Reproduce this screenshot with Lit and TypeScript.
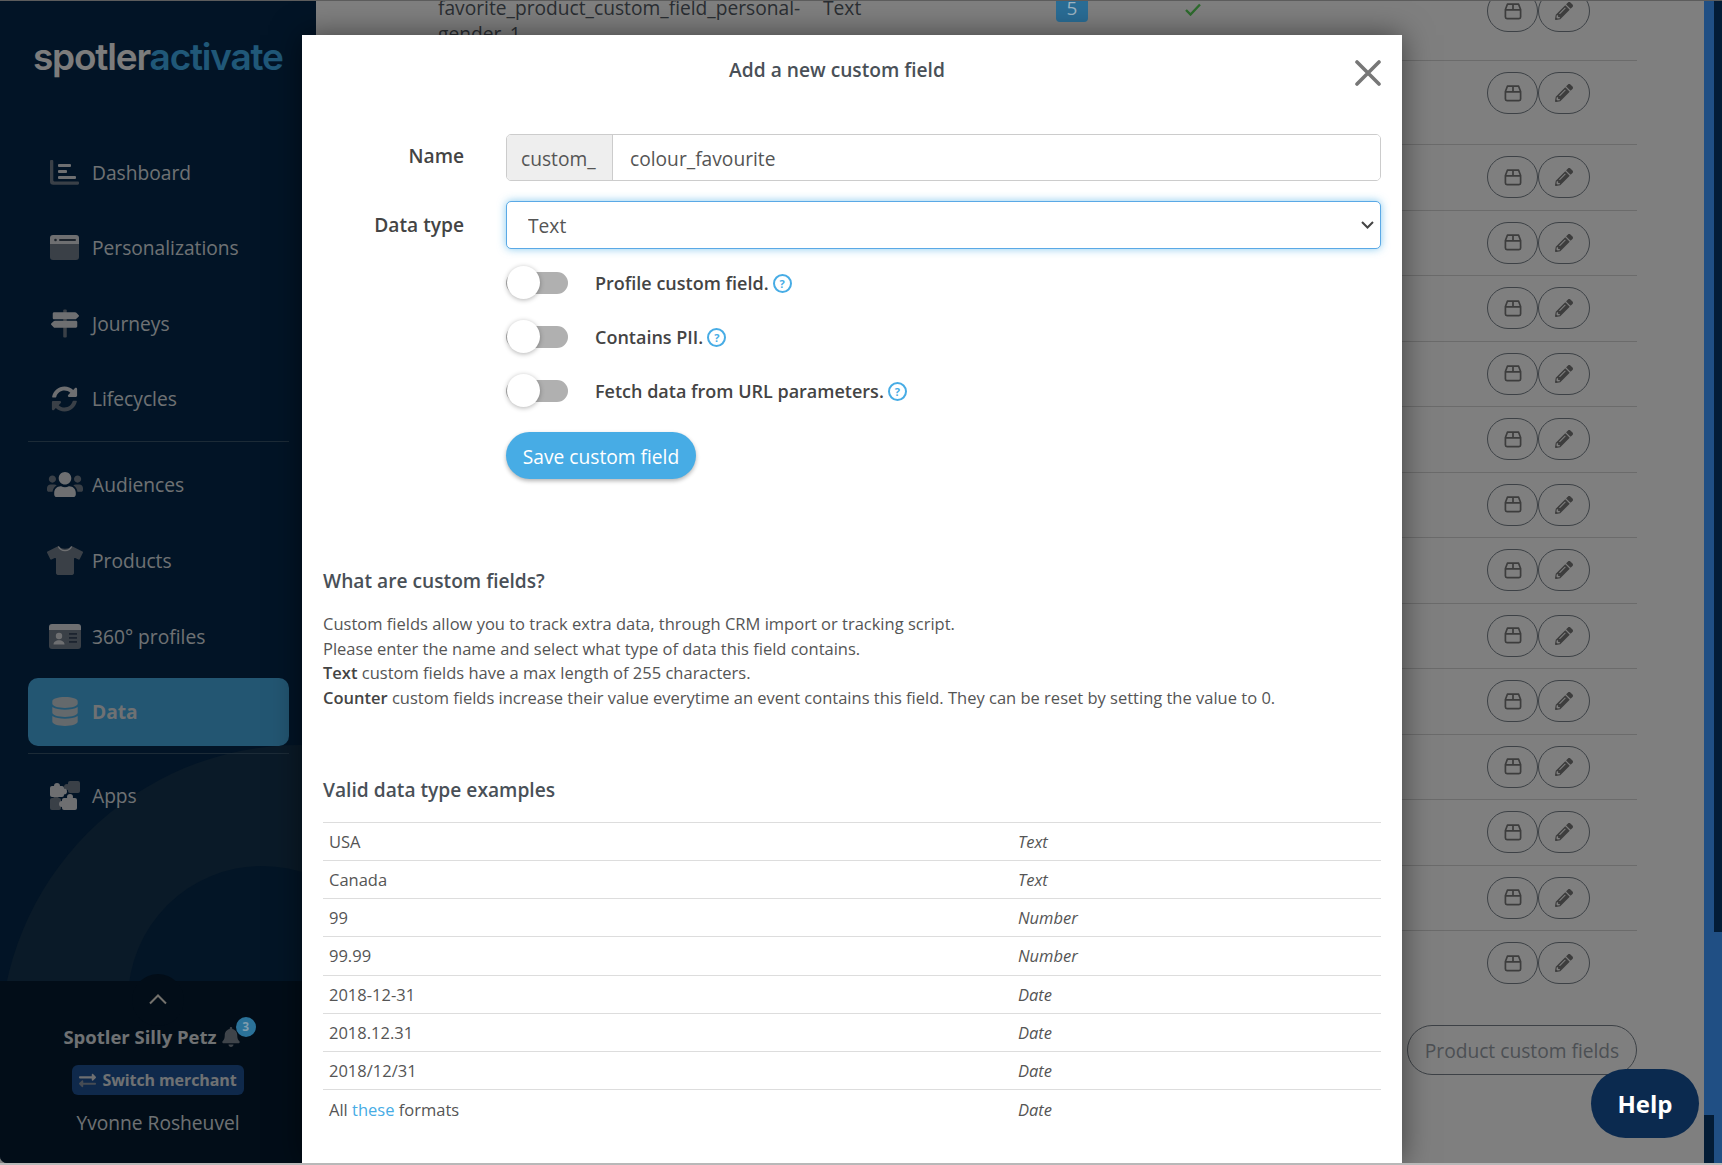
import { LitElement, html, css } from "lit";
import { customElement } from "lit/decorators.js";

const L = "#dcdee2";
const D = "#74808e";

const boxIcon = html`<svg class="bi" width="18" height="17" viewBox="0 0 18 17" fill="none" stroke="#7a7a7a" stroke-width="1.7" stroke-linejoin="round"><path d="M3.4 1.2h11.2l2 5.3v7.6a1.6 1.6 0 0 1-1.6 1.6H3a1.6 1.6 0 0 1-1.6-1.6V6.5Z M1.4 6.8h15.2 M9 1.2v5.6"/></svg>`;
const pencilIcon = html`<svg class="bi" width="18" height="18" viewBox="0 0 512 512" fill="#7a7a7a"><path d="M497.9 142.1l-46.1 46.1c-4.7 4.7-12.3 4.7-17 0l-111-111c-4.7-4.7-4.7-12.3 0-17l46.1-46.1c18.7-18.7 49.1-18.7 67.9 0l60.1 60.1c18.8 18.7 18.8 49.1 0 67.9zM284.2 99.8L21.6 362.4.4 483.9c-2.9 16.4 11.4 30.6 27.8 27.8l121.5-21.3 262.6-262.6c4.7-4.7 4.7-12.3 0-17l-111-111c-4.8-4.7-12.4-4.7-17.1 0zM124.1 339.9c-5.5-5.5-5.5-14.3 0-19.8l154-154c5.5-5.5 14.3-5.5 19.8 0s5.5 14.3 0 19.8l-154 154c-5.5 5.5-14.3 5.5-19.8 0zM88 424h48v36.3l-64.5 11.3-31.1-31.1L51.7 376H88v48z"/></svg>`;

const navIcons: Record<string, unknown> = {
  dashboard: html`<svg width="29" height="25" viewBox="0 0 29 25"><path fill="${D}" d="M0 1.2C0 .5.5 0 1.2 0h1c.6 0 1.100.5 1.100 1.200V20.300c0 .6.500 1.100 1.100 1.100H27.800c.7 0 1.200.5 1.200 1.200v1c0 .7-.5 1.200-1.200 1.200H3.300A3.300 3.300 0 0 1 0 21.500Z"/><rect fill="${L}" x="8" y="4" width="13" height="3" rx="1"/><rect fill="${L}" x="8" y="10" width="9" height="3" rx="1"/><rect fill="${L}" x="8" y="16" width="18" height="3" rx="1"/></svg>`,
  window: html`<svg width="29" height="25" viewBox="0 0 29 25"><path fill="${D}" d="M0 8h29v14a3 3 0 0 1-3 3H3a3 3 0 0 1-3-3Z"/><path fill="${L}" d="M3 0h23a3 3 0 0 1 3 3v6H0V3a3 3 0 0 1 3-3Z"/><circle fill="#3c4a5a" cx="5.500" cy="5" r="1.300"/><rect fill="#3c4a5a" x="9" y="4" width="17" height="2" rx="1"/></svg>`,
  signs: html`<svg width="28" height="29" viewBox="0 0 512 512"><path fill="${D}" d="M224 16c0-8.800 7.200-16 16-16h32c8.800 0 16 7.200 16 16v480c0 8.800-7.200 16-16 16h-32c-8.800 0-16-7.200-16-16Z"/><path fill="${L}" d="M507.310 104.690L464 61.370c-6-6-14.140-9.370-22.630-9.370H56c-13.250 0-24 10.750-24 24v80c0 13.250 10.750 24 24 24h385.370c8.490 0 16.620-3.370 22.630-9.370l43.310-43.310c6.250-6.260 6.250-16.380 0-22.630zM456 204H70.630c-8.490 0-16.620 3.370-22.630 9.370L4.690 256.690c-6.250 6.250-6.250 16.380 0 22.630L48 322.630c6 6 14.140 9.370 22.630 9.370H456c13.250 0 24-10.750 24-24v-80c0-13.250-10.750-24-24-24z"/></svg>`,
  sync: html`<svg width="27" height="26" viewBox="0 0 512 512"><path fill="${L}" d="M370.720 133.280C339.458 104.008 298.888 87.962 255.848 88c-77.458.068-144.328 53.178-162.791 126.850-1.344 5.363-6.122 9.150-11.651 9.150H24.103c-7.498 0-13.194-6.807-11.807-14.176C33.933 94.924 134.813 8 256 8c66.448 0 126.791 26.136 171.315 68.685L463.030 40.970C478.149 25.851 504 36.559 504 57.941V192c0 13.255-10.745 24-24 24H345.941c-21.382 0-32.090-25.851-16.971-40.971l41.750-41.749z"/><path fill="${D}" d="M32 296h134.059c21.382 0 32.090 25.851 16.971 40.971l-41.750 41.750c31.262 29.273 71.835 45.319 114.876 45.280 77.418-.07 144.315-53.144 162.787-126.849 1.344-5.363 6.122-9.150 11.651-9.150h57.304c7.498 0 13.194 6.807 11.807 14.176C478.067 417.076 377.187 504 256 504c-66.448 0-126.791-26.136-171.315-68.685L48.970 471.030C33.851 486.149 8 475.441 8 454.059V320c0-13.255 10.745-24 24-24z"/></svg>`,
  users: html`<svg width="36" height="29" viewBox="0 0 640 512"><path fill="${D}" d="M96 224c35.300 0 64-28.700 64-64s-28.700-64-64-64-64 28.700-64 64 28.700 64 64 64zm448 0c35.300 0 64-28.700 64-64s-28.700-64-64-64-64 28.700-64 64 28.700 64 64 64zm32 32h-64c-17.600 0-33.500 7.100-45.100 18.600 40.300 22.100 68.900 62 75.100 109.400h66c17.700 0 32-14.300 32-32v-32c0-35.300-28.700-64-64-64zm-402.900 18.600C161.500 263.100 145.600 256 128 256H64c-35.300 0-64 28.700-64 64v32c0 17.700 14.300 32 32 32h65.900c6.300-47.400 34.900-87.300 75.200-109.400z"/><path fill="${L}" d="M320 256c61.900 0 112-50.100 112-112S381.900 32 320 32 208 82.100 208 144s50.100 112 112 112zm76.800 32h-8.300c-20.800 10-43.900 16-68.500 16s-47.600-6-68.500-16h-8.300C179.600 288 128 339.600 128 403.200V432c0 26.500 21.500 48 48 48h288c26.500 0 48-21.500 48-48v-28.800c0-63.600-51.600-115.200-115.200-115.200z"/></svg>`,
  shirt: html`<svg width="36" height="29" viewBox="0 0 640 512"><path fill="${D}" d="M631.200 96.500L436.500 0C416.400 27.800 371.900 47.200 320 47.200S223.600 27.800 203.500 0L8.800 96.500c-7.900 4-11.100 13.600-7.200 21.500l57.200 114.500c4 7.900 13.600 11.100 21.500 7.200l56.600-27.700c10.600-5.200 23 2.500 23 14.400V480c0 17.700 14.300 32 32 32h256c17.700 0 32-14.300 32-32V226.300c0-11.800 12.400-19.600 23-14.400l56.600 27.700c7.900 4 17.500.8 21.500-7.200L638.300 118c4-7.900.8-17.600-7.100-21.500z"/><path fill="none" stroke="${L}" stroke-width="22" d="M203 8c20 46 70 72 117 72s97-26 117-72"/></svg>`,
  card: html`<svg width="32" height="25" viewBox="0 0 32 25"><path fill="${D}" d="M0 5h32v17a3 3 0 0 1-3 3H3a3 3 0 0 1-3-3Z"/><path fill="${L}" d="M3 0h26a3 3 0 0 1 3 3v3H0V3a3 3 0 0 1 3-3Z"/><circle fill="${L}" cx="10" cy="12" r="3.200"/><path fill="${L}" d="M4.500 20.500c0-2.600 2.300-4.200 5.500-4.200s5.500 1.600 5.500 4.200Z"/><rect fill="#38485f" x="20" y="9" width="8" height="1.800"/><rect fill="#38485f" x="20" y="13" width="8" height="1.800"/><rect fill="#38485f" x="20" y="17" width="8" height="1.800"/></svg>`,
  db: html`<svg width="26" height="29" viewBox="0 0 448 512"><path fill="#c9d2d8" d="M448 73.143v45.714C448 159.143 347.667 192 224 192S0 159.143 0 118.857V73.143C0 32.857 100.333 0 224 0s224 32.857 224 73.143zM448 176v102.857C448 319.143 347.667 352 224 352S0 319.143 0 278.857V176c48.125 33.143 136.208 48.572 224 48.572S399.874 209.143 448 176zm0 160v102.857C448 479.143 347.667 512 224 512S0 479.143 0 438.857V336c48.125 33.143 136.208 48.572 224 48.572S399.874 369.143 448 336z"/></svg>`,
  puzzle: html`<svg width="30" height="29" viewBox="0 0 30 29"><g fill="${D}"><rect x="18" y="0" width="12" height="12" rx="2"/><circle cx="17" cy="6" r="3"/><rect x="0" y="17" width="11" height="12" rx="2"/><circle cx="6" cy="16" r="2.500"/></g><g fill="${L}"><rect x="0" y="5" width="14" height="11" rx="2"/><circle cx="7" cy="5" r="3"/><circle cx="14" cy="10.500" r="3"/><rect x="12" y="17" width="15" height="12" rx="2"/><circle cx="20" cy="16" r="3"/><circle cx="12" cy="23" r="3"/></g></svg>`,
};

const nav1 = [
  ["dashboard", "Dashboard"],
  ["window", "Personalizations"],
  ["signs", "Journeys"],
  ["sync", "Lifecycles"],
];
const nav2 = [
  ["users", "Audiences"],
  ["shirt", "Products"],
  ["card", "360° profiles"],
  ["db", "Data"],
];

const rowClasses = ["first", "second", ...Array(13).fill("")];
const examples = [
  ["USA", "Text"],
  ["Canada", "Text"],
  ["99", "Number"],
  ["99.99", "Number"],
  ["2018-12-31", "Date"],
  ["2018.12.31", "Date"],
  ["2018/12/31", "Date"],
];
const toggles = ["Profile custom field.", "Contains PII.", "Fetch data from URL parameters."];

@customElement("app-root")
export class AppRoot extends LitElement {
  static styles = css`
    :host {
      display: block;
      width: 1722px;
      height: 1165px;
      position: relative;
      overflow: hidden;
      background: #fff;
      font-family: "Open Sans", "Noto Sans", sans-serif;
      color: #555;
    }
    * { box-sizing: border-box; }
    .page { display: flex; height: 1165px; background: #fff; }

    /* sidebar */
    .sidebar {
      width: 316px; flex: none; height: 1163px;
      position: relative; overflow: hidden;
      display: flex; flex-direction: column;
      background: #04284c;
      border-bottom-left-radius: 7px;
      color: #dfe2e6;
    }
    .circle { position: absolute; border-radius: 50%; }
    .c1 { left: 0; top: 745px; width: 600px; height: 600px; background: #143450; }
    .c2 { left: 128px; top: 866px; width: 268px; height: 268px; background: #062a4c; }
    .logo {
      position: relative; margin: 29px 0 0 33px; height: 59px;
      font-family: "Inter", sans-serif; font-weight: 600; font-size: 37px; line-height: 56px;
      letter-spacing: -1.2px; color: #f8f8f8; white-space: nowrap;
    }
    .logo span { color: #40b0f0; }
    nav { position: relative; margin: 50px 0 0 28px; width: 261px; display: flex; flex-direction: column; gap: 7.6px; }
    .item {
      height: 68px; display: flex; align-items: center; padding-left: 22px; gap: 13px;
      font-size: 19.2px; border-radius: 10px;
    }
    .icon { width: 29px; flex: none; display: flex; justify-content: center; }
    .icon svg { flex: none; display: block; }
    .item.active { background: #47ace5; font-weight: 700; }
    .divider { height: 1px; background: #38566e; }
    .divider.first { margin: 1px 0; }
    .foot {
      position: relative; margin-top: auto; height: 182px; background: #041a30;
      display: flex; flex-direction: column; align-items: center; padding-top: 12px;
    }
    .hump { position: absolute; left: 132px; top: -7px; width: 52px; height: 52px; border-radius: 50%; background: #041a30; }
    .chev { position: relative; display: block; }
    .merchant { position: relative; display: flex; align-items: center; margin-top: 19px; font-size: 18.5px; font-weight: 700; line-height: 26px; margin-left: -13px; white-space: nowrap; }
    .bell { position: relative; margin-left: 5px; display: flex; }
    .badge {
      position: absolute; z-index: 2; left: 14px; top: -10px; width: 20px; height: 20px; border-radius: 50%;
      background: #2b7299; color: #7f9dae; font-size: 12px; font-weight: 700;
      display: flex; align-items: center; justify-content: center;
    }
    .switch {
      position: relative; margin-top: 15px; height: 30px; width: 172px; border-radius: 6px; background: #1e5296;
      display: flex; align-items: center; justify-content: center; gap: 6px;
      font-size: 16px; font-weight: 700; letter-spacing: -0.1px; white-space: nowrap;
    }
    .user { position: relative; margin-top: 15px; font-size: 19.2px; line-height: 26px; }

    /* page behind the dialog */
    main { flex: 1; min-width: 0; padding-left: 34px; width: 1388px; background: #fff; overflow: hidden; }
    .table { margin-top: -22px; width: 1287px; }
    .row {
      height: 65.5px; border-bottom: 1px solid #d6d6d6;
      display: grid; grid-template-columns: 88px 385px 233px 129px 302px 1fr;
      padding-top: 11px; font-size: 19.2px; line-height: 26px; color: #555c66;
    }
    .row.first { height: 83px; padding-top: 17px; }
    .row.second { height: 84px; }
    .row:last-child { border-bottom: 0; }
    .name { grid-column: 2; width: 360px; }
    .type { grid-column: 3; }
    .count {
      grid-column: 4; position: relative; z-index: 2; width: 32px; height: 27px; padding-top: 3px; border-radius: 4px; justify-self: start;
      background: #2a6d96; color: #9db4c2; font-size: 19px; line-height: 20px; text-align: center;
    }
    .check { grid-column: 5; margin-top: 8px; }
    .check svg { display: block; }
    .actions { grid-column: 6; display: flex; }
    .row.first .actions { margin-top: -5px; }
    .btn {
      width: 52px; height: 42px; border: 1px solid #7a838c; border-radius: 21px;
      display: flex; align-items: center; justify-content: center; flex: none;
    }
    .btn.box { width: 51px; }
    .foot-row { display: flex; justify-content: flex-end; margin-top: 28.5px; width: 1287px; }
    .pill {
      width: 230px; height: 50px; border: 1px solid #7a838c; border-radius: 25px;
      display: flex; align-items: center; justify-content: center; font-size: 19.2px; color: #99a0a8;
    }
    .scroll { width: 18px; flex: none; height: 1165px; display: flex; background: #204f84; }
    .scroll i { display: block; width: 9.5px; }
    .scroll .a { height: 50px; margin-top: 1115px; background: #031c36; }
    .scroll .b { height: 932px; width: 8.500px; background: #031c36; }

    .overlay { position: absolute; left: 0; top: 0; bottom: 0; width: 1704px; background: rgba(0,0,0,.5); z-index: 1; }

    /* dialog */
    .modal {
      position: absolute; left: 302px; top: 35px; width: 1100px; height: 1128px; z-index: 2;
      background: #fff; padding: 23px 21px 0; box-shadow: 0 0 28px rgba(0,0,0,.5);
    }
    .title { width: 1028px; text-align: center; font-size: 19.2px; font-weight: 600; line-height: 24px; color: #495057; }
    .close { position: absolute; left: 1053px; top: 25px; display: block; }
    .form { margin-top: 52px; display: grid; grid-template-columns: 141px 875px; column-gap: 42px; row-gap: 20px; align-items: center; }
    label.lbl { text-align: right; font-size: 19.2px; font-weight: 600; color: #444; line-height: 24px; }
    label.lbl.top { position: relative; top: -2px; }
    .group { display: flex; height: 47px; border: 1px solid #ccc; border-radius: 5px; overflow: hidden; }
    .addon { width: 106px; flex: none; background: #eee; border-right: 1px solid #ccc; padding-left: 14px; line-height: 47px; font-size: 19.2px; color: #555; }
    .group input {
      flex: 1; border: 0; outline: 0; padding: 1px 17px 0; font: 19.2px "Open Sans", sans-serif; color: #555; background: #fff; min-width: 0;
    }
    .selwrap { position: relative; height: 48px; }
    .selwrap select {
      appearance: none; -webkit-appearance: none; width: 100%; height: 48px; padding: 0 21px;
      border: 1px solid #5aa9e6; border-radius: 5px; background: #fff; outline: 0;
      box-shadow: 0 0 8px rgba(71,172,229,.65);
      font: 19.2px "Open Sans", sans-serif; color: #555;
    }
    .selchev { position: absolute; right: 7px; top: 20px; display: block; }
    .toggles { grid-column: 2; margin-top: -13px; display: flex; flex-direction: column; }
    .tg { height: 54px; display: flex; align-items: center; font-size: 18px; font-weight: 600; color: #444; }
    .switcher { position: relative; width: 62px; height: 22px; margin-right: 27px; flex: none; background: #b0b0b0; border-radius: 11px; }
    .knob { position: absolute; left: 1px; top: -6px; width: 33px; height: 33px; border-radius: 50%; background: #fff; box-shadow: 0 1px 5px rgba(0,0,0,.3); }
    .q {
      width: 19px; height: 19px; margin-left: 4px; border: 2px solid #47ace5; border-radius: 50%;
      color: #47ace5; font-size: 11px; font-weight: 700; display: flex; align-items: center; justify-content: center; line-height: 1;
    }
    .save {
      grid-column: 2; justify-self: start; margin-top: -6px; width: 190px; height: 47px; border: 0; border-radius: 24px;
      background: #47ace5; color: #fff; font: 19.2px "Open Sans", sans-serif; white-space: nowrap; padding: 1px 0 0;
      box-shadow: 0 2px 4px rgba(0,0,0,.3);
    }
    h3 { margin: 0; font-size: 19.2px; font-weight: 600; line-height: 24px; color: #495057; }
    h3.what { margin-top: 89.5px; }
    .desc { margin: 19.5px 0 0; font-size: 16.5px; line-height: 24.7px; color: #555; }
    .desc b { font-weight: 600; color: #444; }
    h3.valid { margin-top: 67px; }
    .examples { margin-top: 20px; border-top: 1px solid #ddd; font-size: 16.5px; color: #555; }
    .ex { height: 38.200px; display: grid; grid-template-columns: 689px 1fr; align-items: center; padding-left: 6px; border-bottom: 1px solid #ddd; }
    .ex:last-child { border-bottom: 0; }
    .ex em { font-style: italic; }
    .ex a { color: #47ace5; text-decoration: none; }

    .help {
      position: absolute; z-index: 3; left: 1591px; top: 1069px; width: 108px; height: 69px; border-radius: 35px;
      background: #0b2a4f; color: #fff; font-size: 24px; font-weight: 700;
      display: flex; align-items: center; justify-content: center;
    }
    .frame { position: absolute; inset: 0; z-index: 4; border-top: 1px solid #5c5c5c; border-bottom: 2px solid #b8b8b8; pointer-events: none; }
  `;

  render() {
    return html`
      <div class="page">
        <aside class="sidebar">
          <div class="circle c1"></div>
          <div class="circle c2"></div>
          <div class="logo">spotler<span>activate</span></div>
          <nav>
            ${nav1.map(([i, t]) => this.item(i, t))}
            <div class="divider first"></div>
            ${nav2.map(([i, t]) => this.item(i, t, t === "Data"))}
            <div class="divider"></div>
            ${this.item("puzzle", "Apps")}
          </nav>
          <div class="foot">
            <div class="hump"></div>
            <svg class="chev" width="18" height="12" viewBox="0 0 18 12" fill="none" stroke="#e6e2d8" stroke-width="2"><path d="M1 10.500 9 2.500l8 8"/></svg>
            <div class="merchant">Spotler Silly Petz
              <span class="bell">
                <svg width="18" height="20" viewBox="0 0 448 512"><path fill="#7e8894" d="M224 512c35.320 0 63.970-28.650 63.970-64H160.030c0 35.350 28.650 64 63.970 64zm215.390-149.710c-19.320-20.760-55.470-51.990-55.470-154.290 0-77.700-54.480-139.900-127.940-155.160V32c0-17.670-14.320-32-31.980-32s-31.980 14.330-31.980 32v20.840C118.560 68.100 64.080 130.300 64.080 208c0 102.300-36.150 133.530-55.470 154.290-6 6.450-8.660 14.160-8.610 21.710.11 16.400 12.980 32 32.100 32h383.800c19.120 0 32-15.600 32.100-32 .05-7.550-2.610-15.270-8.610-21.710z"/></svg>
                <span class="badge">3</span>
              </span>
            </div>
            <div class="switch">
              <svg width="17" height="17" viewBox="0 0 512 512"><path fill="#dcdee2" d="M0 168v-16c0-13.255 10.745-24 24-24h360V80c0-21.367 25.899-32.042 40.971-16.971l80 80c9.372 9.373 9.372 24.569 0 33.941l-80 80C409.956 271.982 384 261.456 384 240v-48H24c-13.255 0-24-10.745-24-24z"/><path fill="#8c98a8" d="M488 320H128v-48c0-21.314-25.862-32.080-40.971-16.971l-80 80c-9.372 9.373-9.372 24.569 0 33.941l80 80C102.057 463.997 128 453.437 128 432v-48h360c13.255 0 24-10.745 24-24v-16c0-13.255-10.745-24-24-24z"/></svg>
              Switch merchant
            </div>
            <div class="user">Yvonne Rosheuvel</div>
          </div>
        </aside>

        <main>
          <div class="table">
            ${rowClasses.map(
              (c, i) => html`<div class="row ${c}">
                ${i === 0
                  ? html`<div class="name">favorite_product_custom_field_personal-gender_1</div>
                      <div class="type">Text</div>
                      <div class="count">5</div>
                      <div class="check">
                        <svg width="16" height="13" viewBox="0 0 16 13" fill="none" stroke="#5ad65a" stroke-width="2.400"><path d="M1 7l4.500 4.500L15 1.500"/></svg>
                      </div>`
                  : ""}
                <div class="actions">
                  <div class="btn box">${boxIcon}</div>
                  <div class="btn">${pencilIcon}</div>
                </div>
              </div>`
            )}
          </div>
          <div class="foot-row"><div class="pill">Product custom fields</div></div>
        </main>
        <div class="scroll"><i class="a"></i><i class="b"></i></div>
      </div>

      <div class="overlay"></div>

      <section class="modal">
        <div class="title">Add a new custom field</div>
        <svg class="close" width="26" height="26" viewBox="0 0 26 26" stroke="#777" stroke-width="3.600" stroke-linecap="round"><path d="M2 2l22 22M24 2 2 24"/></svg>
        <div class="form">
          <label class="lbl top">Name</label>
          <div class="group"><div class="addon">custom_</div><input .value=${"colour_favourite"} /></div>
          <label class="lbl">Data type</label>
          <div class="selwrap">
            <select><option>Text</option><option>Number</option><option>Date</option><option>Counter</option></select>
            <svg class="selchev" width="13" height="8" viewBox="0 0 13 8" fill="none" stroke="#444" stroke-width="2"><path d="M1 1l5.500 5.500L12 1"/></svg>
          </div>
          <div class="toggles">
            ${toggles.map(
              (t) => html`<div class="tg">
                <div class="switcher"><div class="knob"></div></div>
                ${t}<span class="q">?</span>
              </div>`
            )}
          </div>
          <button class="save">Save custom field</button>
        </div>

        <h3 class="what">What are custom fields?</h3>
        <p class="desc">
          Custom fields allow you to track extra data, through CRM import or tracking script.<br />
          Please enter the name and select what type of data this field contains.<br />
          <b>Text</b> custom fields have a max length of 255 characters.<br />
          <b>Counter</b> custom fields increase their value everytime an event contains this field. They can be reset by setting the value to 0.
        </p>

        <h3 class="valid">Valid data type examples</h3>
        <div class="examples">
          ${examples.map(([a, b]) => html`<div class="ex"><span>${a}</span><em>${b}</em></div>`)}
          <div class="ex"><span>All <a href="#">these</a> formats</span><em>Date</em></div>
        </div>
      </section>

      <div class="help">Help</div>
      <div class="frame"></div>
    `;
  }

  item(icon: string, text: string, active = false) {
    return html`<div class="item ${active ? "active" : ""}">
      <span class="icon">${navIcons[icon]}</span>${text}
    </div>`;
  }
}
